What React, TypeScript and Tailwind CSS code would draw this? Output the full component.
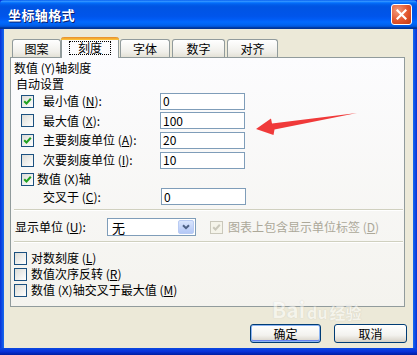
import React from "react";

function Check({ checked = false, disabled = false }: { checked?: boolean; disabled?: boolean }) {
  return (
    <span
      className={
        disabled
          ? "w-[13px] h-[13px] shrink-0 border border-[#CAC8BB] bg-[#F5F4EA] flex items-center justify-center"
          : "w-[13px] h-[13px] shrink-0 border border-[#1C5180] bg-[linear-gradient(135deg,#DCDCD7,#FFFFFF)] flex items-center justify-center"
      }
    >
      {checked && (
        <svg width="9" height="9" viewBox="0 0 9 9">
          <path
            d="M1.2 4.2 L3.5 6.5 L7.8 1.8"
            stroke={disabled ? "#CAC8BB" : "#21A121"}
            strokeWidth="2"
            fill="none"
          />
        </svg>
      )}
    </span>
  );
}

function Field({ value }: { value: string }) {
  return (
    <div className="w-[85px] h-[17px] border border-[#7F9DB9] bg-white flex items-center pl-[2px] text-[12px] leading-none">
      {value}
    </div>
  );
}

function M({ k }: { k: string }) {
  return (
    <>
      {" ("}
      <span className="underline">{k}</span>
      {")"}
    </>
  );
}

function Row({
  h,
  checked,
  label,
  k,
  value,
}: {
  h: string;
  checked: boolean;
  label: string;
  k: string;
  value: string;
}) {
  return (
    <div className={`${h} flex items-center pl-[10px]`}>
      <Check checked={checked} />
      <span className="ml-[9px] w-[117px] whitespace-nowrap leading-none">
        {label}
        <M k={k} />:
      </span>
      <Field value={value} />
    </div>
  );
}

function Tab({ label, w, ml, selected = false }: { label: string; w: string; ml: string; selected?: boolean }) {
  if (selected) {
    return (
      <div className={`${w} ${ml} h-[21px] -mb-px relative z-10 flex flex-col border-x border-[#919B9C] bg-[#FCFCFE] rounded-t-[3px]`}>
        <div className="h-[3px] -mx-px rounded-t-[3px] bg-[linear-gradient(#E68B2C,#FFC83C)]" />
        <div className="flex-1 flex items-start justify-center pt-[1px]">
          <span className="border border-dotted border-black px-[8px] h-[14px] flex items-center leading-none">{label}</span>
        </div>
      </div>
    );
  }
  return (
    <div
      className={`${w} ${ml} h-[18px] border border-b-0 border-[#919B9C] rounded-t-[3px] bg-[linear-gradient(#FFFFFF,#F0EFEA_70%,#E3E1D6)] flex items-center justify-center leading-none`}
    >
      {label}
    </div>
  );
}

export default function App() {
  return (
    <div className="w-[417px] h-[355px] relative overflow-hidden bg-[#0831D9] text-[12px] text-black font-['Noto_Sans_CJK_SC','Noto_Sans',sans-serif]">
      <div className="flex flex-col h-full">
        {/* Title bar */}
        <div className="h-[29px] shrink-0 rounded-t-[4px] bg-[linear-gradient(#0058EE_0%,#3593FF_4%,#288EFF_6%,#127DFF_8%,#036FFC_10%,#0262EE_14%,#0057E5_20%,#0054E3_24%,#0055EB_56%,#005BF5_66%,#026AFE_76%,#0062EF_86%,#0052D6_92%,#0040AB_94%,#003092_100%)] flex items-center justify-between pl-[8px] pr-[5px]">
          <span className="text-white font-bold text-[13px] tracking-[0.4px] leading-none [text-shadow:1px_1px_0_#0A1D6E]">
            坐标轴格式
          </span>
          <div className="w-[21px] h-[21px] rounded-[3px] border border-white bg-[radial-gradient(circle_at_30%_30%,#F39A7C,#E2552D_55%,#C23A12)] flex items-center justify-center">
            <svg width="11" height="11" viewBox="0 0 11 11">
              <path d="M1.5 1.5 L9.5 9.5 M9.5 1.5 L1.5 9.5" stroke="white" strokeWidth="2.2" strokeLinecap="square" />
            </svg>
          </div>
        </div>

        <div className="flex-1 flex">
          <div className="w-[4px] bg-[linear-gradient(90deg,#0831D9,#166AEE)]" />
          {/* Body */}
          <div className="flex-1 bg-[#ECE9D8] flex flex-col pt-[8px]">
            {/* Tabs */}
            <div className="h-[20px] flex items-end ml-[8px]">
              <Tab label="图案" w="w-[49px]" ml="ml-0" />
              <Tab label="刻度" w="w-[58px]" ml="ml-0" selected />
              <Tab label="字体" w="w-[50px]" ml="ml-[1px]" />
              <Tab label="数字" w="w-[53px]" ml="ml-[2px]" />
              <Tab label="对齐" w="w-[51px]" ml="ml-[2px]" />
            </div>

            {/* Panel */}
            <div className="ml-[6px] w-[395px] h-[250px] border border-[#919B9C] bg-[linear-gradient(#FCFCFE,#F4F3EE)] flex flex-col">
              <div className="h-[19px] flex items-center pl-[3px] leading-none">
                数值 (Y)轴刻度
              </div>
              <div className="h-[14px] flex items-center pl-[5px] leading-none">自动设置</div>
              <Row h="h-[20px]" checked label="最小值" k="N" value="0" />
              <Row h="h-[19px]" checked={false} label="最大值" k="X" value="100" />
              <Row h="h-[20px]" checked label="主要刻度单位" k="A" value="20" />
              <Row h="h-[20px]" checked={false} label="次要刻度单位" k="I" value="10" />
              <div className="h-[18px] flex items-center pl-[10px]">
                <Check checked />
                <span className="ml-[3px] leading-none">
                  数值 (<span>X</span>)轴
                </span>
              </div>
              <div className="h-[17px] flex items-center pl-[32px]">
                <span className="w-[118px] leading-none whitespace-nowrap">
                  交叉于<M k="C" />:
                </span>
                <Field value="0" />
              </div>

              <div className="mt-[4px] ml-[3px] mr-[1px] h-[2px] border-t border-[#D0D0BF] border-b border-b-white" />

              <div className="h-[30px] pt-[2px] flex items-center pl-[4px]">
                <span className="w-[92px] leading-none whitespace-nowrap">
                  显示单位<M k="U" />:
                </span>
                <div className="w-[89px] h-[18px] border border-[#7F9DB9] bg-white flex items-center justify-between">
                  <span className="pl-[4px] leading-none text-[13px]">无</span>
                  <div className="w-[16px] h-[14px] mr-[1px] rounded-[2px] border border-[#B9CBF3] bg-[linear-gradient(#D9E5FD,#B4C8F6)] flex items-center justify-center">
                    <svg width="8" height="6" viewBox="0 0 8 6">
                      <path d="M1 1.2 L4 4.2 L7 1.2" stroke="#4D6185" strokeWidth="2" fill="none" />
                    </svg>
                  </div>
                </div>
                <span className="ml-[14px]">
                  <Check checked disabled />
                </span>
                <span className="ml-[5px] text-[#ACA899] leading-none whitespace-nowrap">
                  图表上包含显示单位标签<M k="D" />
                </span>
              </div>

              <div className="ml-[3px] mr-[1px] h-[2px] border-t border-[#D0D0BF] border-b border-b-white" />

              <div className="mt-[7px] flex flex-col pl-[3px]">
                <div className="h-[16px] flex items-center">
                  <Check />
                  <span className="ml-[4px] leading-none">
                    对数刻度<M k="L" />
                  </span>
                </div>
                <div className="h-[16px] flex items-center">
                  <Check />
                  <span className="ml-[4px] leading-none">
                    数值次序反转<M k="R" />
                  </span>
                </div>
                <div className="h-[16px] flex items-center">
                  <Check />
                  <span className="ml-[4px] leading-none">
                    数值 (X)轴交叉于最大值<M k="M" />
                  </span>
                </div>
              </div>
            </div>

            {/* Buttons */}
            <div className="mt-[17px] flex justify-end gap-[13px] pr-[6px]">
              <button className="w-[71px] h-[19px] rounded-[3px] border border-[#003C74] bg-[linear-gradient(#FFFFFF,#F3F2EE_60%,#D6D0C5)] shadow-[inset_0_0_0_1px_#8CB4F2,inset_0_-1px_0_1px_#6982EE] flex items-center justify-center leading-none text-[12px]">
                确定
              </button>
              <button className="w-[73px] h-[19px] rounded-[3px] border border-[#003C74] bg-[linear-gradient(#FFFFFF,#F3F2EE_60%,#D6D0C5)] flex items-center justify-center leading-none text-[12px]">
                取消
              </button>
            </div>
          </div>
          <div className="w-[4px] bg-[linear-gradient(90deg,#166AEE,#0831D9)]" />
        </div>
        <div className="h-[7px] shrink-0 bg-[linear-gradient(#0B49E0,#0831D9_50%,#001EA0)]" />
      </div>

      {/* Red annotation arrow */}
      <svg className="absolute left-0 top-0 pointer-events-none" width="417" height="355" viewBox="0 0 417 355">
        <polygon
          points="256,129 271,118.5 272,123.5 357,113 274.5,129.5 273.5,135"
          fill="#F03A3A"
        />
      </svg>

      {/* Watermark */}
      <div className="absolute left-[272px] top-[299px] pointer-events-none flex items-end gap-[2px] opacity-50">
        <span className="text-[21px] font-bold leading-none text-white [text-shadow:0_0_1px_#A8A8A0]">Bai</span>
        <span className="text-[16px] font-bold leading-none text-white [text-shadow:0_0_1px_#A8A8A0]">du</span>
        <span className="text-[16px] font-bold leading-none text-white [text-shadow:0_0_1px_#A8A8A0]">经验</span>
      </div>
    </div>
  );
}
